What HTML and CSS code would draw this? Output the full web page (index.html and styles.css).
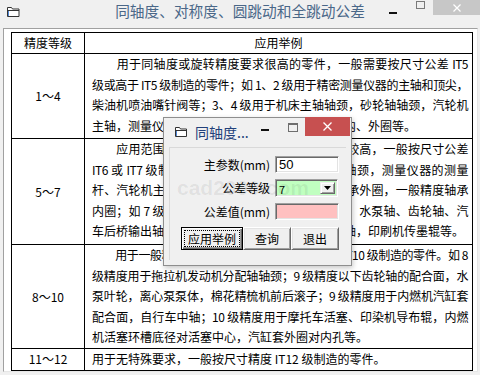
FILE: index.html
```html
<!DOCTYPE html>
<html lang="zh-CN">
<head>
<meta charset="utf-8">
<title>同轴度、对称度、圆跳动和全跳动公差</title>
<link rel="stylesheet" href="styles.css">
</head>
<body>
<div class="win">
  <div class="titlebar">
    <svg class="appicon" width="13" height="10" viewBox="0 0 13 10"><path d="M0.5 0.5h4l1 1.5h6.5v7.5h-11.5z" fill="#fff" stroke="#333"/><path d="M0.5 3.5h11.5" stroke="#333"/><path d="M1.5 4v5" stroke="#4f86d6"/></svg>
    <div class="title">同轴度、对称度、圆跳动和全跳动公差</div>
    <div class="caps">
      <span class="cap-min"></span>
      <span class="cap-max"></span>
      <span class="cap-close"><svg width="8" height="8" viewBox="0 0 8 8"><path d="M0.5 0.5L7.5 7.5M7.5 0.5L0.5 7.5" stroke="#fff" stroke-width="1.2"/></svg></span>
    </div>
  </div>
  <div class="client">
    <table class="grid">
      <colgroup><col class="c1"><col class="c2"></colgroup>
      <tr class="rh"><td class="n">精度等级</td><td class="h">应用举例</td></tr>
      <tr class="r1"><td class="n">1～4</td><td class="t">
        <div class="ln">　　用于同轴度或旋转精度要求很高的零件，一般需要按尺寸公差 IT5</div>
        <div class="ln">级或高于 IT5 级制造的零件；如 1、2 级用于精密测量仪器的主轴和顶尖，</div>
        <div class="ln">柴油机喷油嘴针阀等；3、4 级用于机床主轴轴颈，砂轮轴轴颈，汽轮机</div>
        <div class="lst">主轴，测量仪器的小齿轮轴，高精度滚动轴承的内、外圈等。</div>
      </td></tr>
      <tr class="r2"><td class="n">5～7</td><td class="t">
        <div class="ln">　　应用范围较广的精度等级，用于精度要求比较高，一般按尺寸公差</div>
        <div class="ln">IT6 或 IT7 级制造的零件。如 5 级常用在机床主轴颈，测量仪器的测量</div>
        <div class="ln">杆、汽轮机主轴，柱塞油泵转子，高精度滚动轴承外圈，一般精度轴承</div>
        <div class="ln">内圈；如 7 级用于内燃机曲轴，凸轮轴，轧辊轴，水泵轴、齿轮轴、汽</div>
        <div class="lst">车后桥输出轴，电机转子，蜗轮轴，高精度齿轮轴，印刷机传墨辊等。</div>
      </td></tr>
      <tr class="r3"><td class="n">8～10</td><td class="t">
        <div class="ln">　　用于一般精度要求，通常按照尺寸公差 IT9～IT10 级制造的零件。如 8</div>
        <div class="ln">级精度用于拖拉机发动机分配轴轴颈；9 级精度以下齿轮轴的配合面，水</div>
        <div class="ln">泵叶轮，离心泵泵体，棉花精梳机前后滚子；9 级精度用于内燃机汽缸套</div>
        <div class="ln">配合面，自行车中轴；10 级精度用于摩托车活塞、印染机导布辊，内燃</div>
        <div class="lst">机活塞环槽底径对活塞中心，汽缸套外圈对内孔等。</div>
      </td></tr>
      <tr class="r4"><td class="n">11～12</td><td class="t">
        <div class="lst">用于无特殊要求，一般按尺寸精度 IT12 级制造的零件。</div>
      </td></tr>
    </table>
  </div>
</div>

<div class="dlg">
  <div class="dlg-bar">
    <svg class="dlg-icon" width="12" height="10" viewBox="0 0 12 10"><path d="M0.5 0.5h4l1 1.5h6v7.5h-11z" fill="#fff" stroke="#333"/><path d="M0.5 3.5h11" stroke="#333"/><path d="M1.5 4v5" stroke="#4f86d6"/></svg>
    <span class="dlg-title">同轴度...</span>
    <span class="d-min"></span>
    <span class="d-max"></span>
    <span class="d-close"><svg width="9" height="9" viewBox="0 0 9 9"><path d="M0.5 0.5L8.5 8.5M8.5 0.5L0.5 8.5" stroke="#fff" stroke-width="1.3"/></svg></span>
  </div>
  <div class="dlg-client">
    <div class="form">
      <span class="lbl">主参数(mm)</span>
      <div class="field">50</div>
      <span class="lbl">公差等级</span>
      <div class="combo"><span class="combo-val">7</span><span class="combo-btn"><svg width="7" height="4" viewBox="0 0 7 4"><path d="M0 0h7l-3.5 4z" fill="#000"/></svg></span></div>
      <span class="lbl">公差值(mm)</span>
      <div class="field pink"></div>
    </div>
    <div class="btns">
      <button class="btn btn-default"><span class="focus">应用举例</span></button>
      <button class="btn">查询</button>
      <button class="btn">退出</button>
    </div>
  </div>
  <div class="wm">cad2000.com</div>
</div>
</body>
</html>
```

FILE: styles.css
```css
html, body {
  margin: 0;
  padding: 0;
}
body {
  width: 480px;
  height: 375px;
  overflow: hidden;
  background: #f0f0f0;
  font-family: "Noto Sans CJK SC", sans-serif;
  position: relative;
}

.win {
  width: 480px;
  height: 375px;
  display: flex;
  flex-direction: column;
}

.titlebar {
  height: 28px;
  flex: none;
  display: grid;
  grid-template-columns: 1fr auto 1fr;
  align-items: start;
}
.appicon {
  display: block;
  margin: 7px 0 0 7px;
}
.title {
  font-size: 14.7px;
  line-height: 22px;
  color: #4a6788;
  white-space: nowrap;
}
.caps {
  justify-self: end;
  display: flex;
  align-items: flex-start;
}
.cap-min {
  width: 8px;
  height: 2px;
  background: #111;
  margin-top: 12px;
}
.cap-max {
  width: 7px;
  height: 6px;
  border: 1px solid #7a7a7a;
  margin: 1px 0 0 19px;
}
.cap-close {
  width: 47px;
  height: 15px;
  margin-left: 8px;
  background: #c7c7c7;
  display: flex;
  align-items: center;
  justify-content: center;
}
.cap-close svg { display: block; }

.client {
  flex: none;
  height: 344px;
  margin: 0 2px 0 3px;
  box-sizing: border-box;
  border: 1px solid;
  border-color: #a0a0a0 #e6e6e6 #e6e6e6 #a0a0a0;
  background: #fff;
  padding: 3px 0 0 7px;
}

.grid {
  border-collapse: collapse;
  table-layout: fixed;
  width: 462px;
  border: 1px solid #000;
  font-size: 12px;
  line-height: 20.4px;
  color: #000;
}
.c1 { width: 73px; }
.grid td {
  border: 1px solid #000;
  padding: 0;
}
.grid td.n {
  text-align: center;
  vertical-align: middle;
}
.grid td.h {
  text-align: center;
  vertical-align: middle;
}
.grid td.t {
  vertical-align: top;
  padding: 0 4px 0 7px;
}
.rh { height: 20px; }
.r1 { height: 85px; }
.r2 { height: 106px; }
.r3 { height: 104px; }
.r4 { height: 21px; }

.ln {
  text-align: justify;
  text-align-last: justify;
  letter-spacing: -0.5px;
}
.lst {
  text-align: left;
  white-space: nowrap;
}

/* dialog window */
.dlg {
  position: absolute;
  left: 163px;
  top: 117px;
  width: 189px;
  height: 149px;
  box-sizing: border-box;
  border: 1px solid #8e8e8e;
  background: #f0f0f0;
  box-shadow: 1px 2px 5px rgba(0, 0, 0, 0.22);
  z-index: 5;
}
.dlg-bar {
  height: 29px;
  display: flex;
  align-items: flex-start;
}
.dlg-icon {
  display: block;
  margin: 9px 0 0 11px;
  flex: none;
}
.dlg-title {
  margin: 4px 0 0 8px;
  font-size: 14px;
  line-height: 20px;
  color: #22407a;
  white-space: nowrap;
}
.d-min {
  width: 8px;
  height: 2px;
  background: #111;
  margin: 11px 0 0 auto;
}
.d-max {
  width: 8px;
  height: 6px;
  border: 1px solid #6e6e6e;
  border-top-width: 2px;
  margin: 5px 0 0 19px;
}
.d-close {
  width: 45px;
  height: 19px;
  margin: -1px 1px 0 7px;
  background: #c75050;
  display: flex;
  align-items: center;
  justify-content: center;
}
.d-close svg { display: block; }

.dlg-client {
  margin: 0 5px;
  height: 113px;
  box-sizing: border-box;
  border-top: 1px solid #d9d9d9;
  border-left: 1px solid #d9d9d9;
}
.form {
  display: grid;
  grid-template-columns: 100px 64px;
  grid-template-rows: 17px 18px 17px;
  column-gap: 5px;
  row-gap: 6px;
  padding-top: 8px;
}
.lbl {
  align-self: center;
  text-align: right;
  font-size: 12px;
  line-height: 16px;
  color: #000;
  white-space: nowrap;
}
.field, .combo {
  box-sizing: border-box;
  background: #fff;
  border: 1px solid;
  border-color: #a0a0a0 #fff #fff #a0a0a0;
  box-shadow: inset 1px 1px 0 #696969, inset -1px -1px 0 #e3e3e3;
}
.field {
  height: 17px;
  padding: 1px 0 0 3px;
  font-family: "Liberation Sans", sans-serif;
  font-size: 13px;
  line-height: 14px;
  color: #000;
}
.field.pink {
  background: #ffc0c0;
}
.combo {
  width: 63px;
  height: 18px;
  background: #c0ffc0;
  display: flex;
  align-items: stretch;
  padding: 2px;
}
.combo-val {
  flex: 1;
  font-size: 11px;
  line-height: 14px;
  padding-left: 1px;
}
.combo-btn {
  width: 15px;
  box-sizing: border-box;
  background: #f0f0f0;
  border: 1px solid;
  border-color: #f0f0f0 #696969 #696969 #f0f0f0;
  box-shadow: inset 1px 1px 0 #fff, inset -1px -1px 0 #a0a0a0;
  display: flex;
  align-items: center;
  justify-content: center;
}
.combo-btn svg { display: block; }

.btns {
  display: flex;
  margin: 7px 0 0 11px;
}
.btn {
  height: 23px;
  width: 48px;
  box-sizing: border-box;
  padding: 0;
  margin: 0;
  font-family: "Noto Sans CJK SC", sans-serif;
  font-size: 12px;
  line-height: 16px;
  color: #000;
  background: #f0f0f0;
  border: 1px solid;
  border-color: #fff #696969 #696969 #fff;
  box-shadow: inset 1px 1px 0 #e3e3e3, inset -1px -1px 0 #a0a0a0;
  display: flex;
  align-items: center;
  justify-content: center;
}
.btn-default {
  width: 62px;
  border: 1px solid #000;
  box-shadow: inset 1px 1px 0 #fff, inset -1px -1px 0 #696969, inset -2px -2px 0 #a0a0a0;
}
.focus {
  display: flex;
  align-items: center;
  justify-content: center;
  width: 56px;
  height: 17px;
  box-sizing: border-box;
  border: 1px dotted #000;
}

.wm {
  position: absolute;
  left: 13px;
  top: 59px;
  font-family: "Liberation Sans", sans-serif;
  font-weight: bold;
  font-size: 21px;
  line-height: 22px;
  color: rgba(0, 0, 0, 0.07);
  white-space: nowrap;
  pointer-events: none;
}
```
